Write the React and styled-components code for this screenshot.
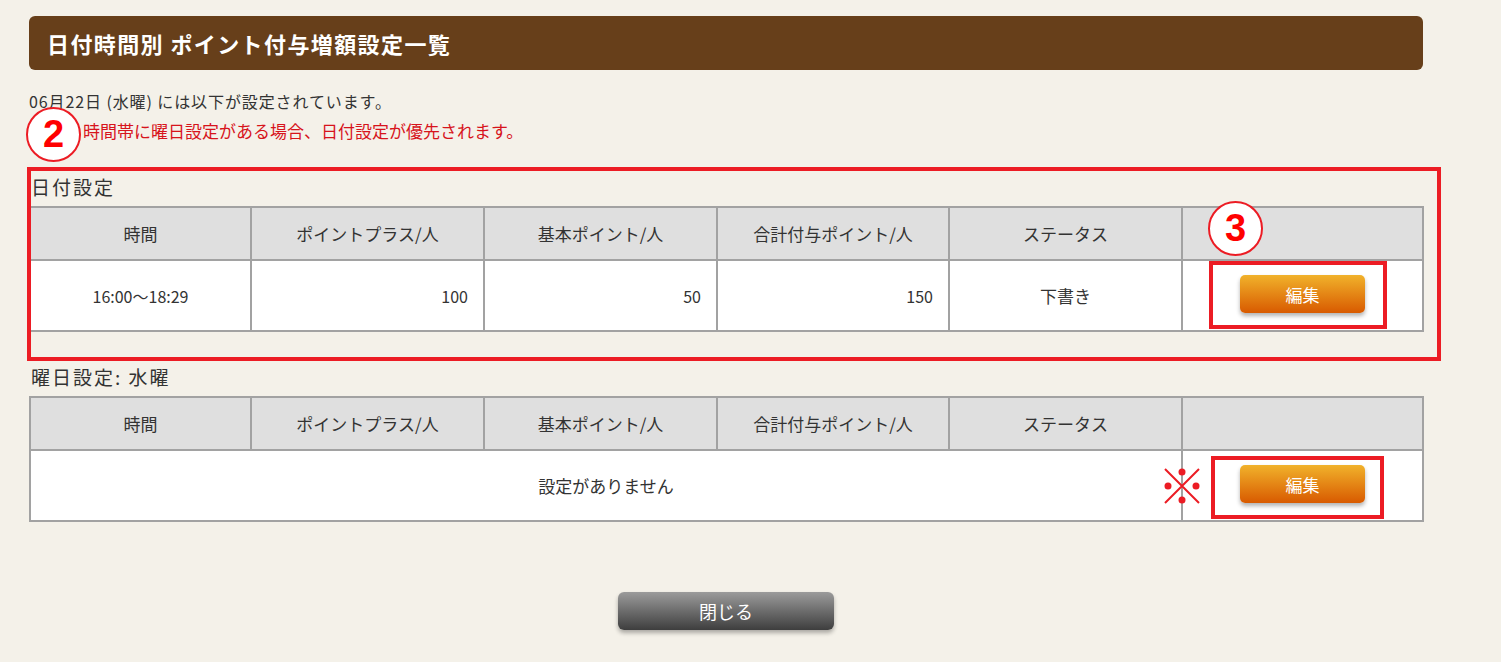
import styled, { createGlobalStyle } from "styled-components";

const GlobalStyle = createGlobalStyle`
  body {
    margin: 0;
    background: #f4f1e9;
    font-family: "Noto Sans CJK JP", "Noto Sans", sans-serif;
    color: #333;
  }
`;

const Page = styled.div`
  position: relative;
  width: 1501px;
  height: 662px;
  overflow: hidden;
`;

const Wrap = styled.div`
  width: 1394px;
  padding: 16px 0 0 29px;
`;

const Header = styled.h1`
  margin: 0;
  height: 54px;
  line-height: 54px;
  padding-left: 18px;
  background: #673f1a;
  border-radius: 6px;
  color: #fff;
  font-size: 22px;
  font-weight: 700;
  letter-spacing: 1.4px;
`;

const Intro = styled.div`
  margin-top: 16px;
  line-height: 30px;
  p {
    margin: 0;
    font-size: 16px;
    letter-spacing: 0.9px;
  }
  .notice {
    color: #d7141c;
    font-size: 17px;
    letter-spacing: 0;
    padding-left: 54px;
  }
`;

const SectionTitle = styled.h2`
  margin: ${(p) => p.$top}px 0 6px 2px;
  font-size: 19px;
  font-weight: 400;
  line-height: 26px;
  letter-spacing: 2px;
`;

const Table = styled.table`
  width: 1393px;
  border-collapse: collapse;
  background: #fff;
  table-layout: fixed;
  th,
  td {
    border: 2px solid #a2a2a2;
    font-size: 17px;
    font-weight: 400;
  }
  th {
    height: 49px;
    background: #dfdfdf;
    color: #333;
  }
  td {
    height: 69px;
    text-align: center;
    padding: 0 15px;
  }
  td.time {
    font-size: 16px;
  }
  td.num {
    text-align: right;
    font-size: 16px;
  }
`;

const EditButton = styled.button`
  width: 125px;
  height: 38px;
  margin-bottom: 3px;
  border: none;
  border-radius: 5px;
  background: linear-gradient(#f1b22b, #d85a00);
  box-shadow: 0 3px 4px rgba(0, 0, 0, 0.3);
  color: #fff;
  font-family: inherit;
  font-size: 17px;
  cursor: pointer;
`;

const Footer = styled.div`
  display: flex;
  justify-content: center;
  margin-top: 70px;
`;

const CloseButton = styled.button`
  width: 216px;
  height: 38px;
  border: none;
  border-radius: 6px;
  background: linear-gradient(#9b9b9b, #3e3e3e);
  box-shadow: 0 3px 4px rgba(0, 0, 0, 0.3);
  color: #fff;
  font-family: inherit;
  font-size: 18px;
`;

/* annotation overlays */
const Frame = styled.div`
  position: absolute;
  left: ${(p) => p.$x}px;
  top: ${(p) => p.$y}px;
  width: ${(p) => p.$w}px;
  height: ${(p) => p.$h}px;
  border: 4px solid #ec1c24;
  box-sizing: border-box;
  pointer-events: none;
`;

const Badge = styled.div`
  position: absolute;
  left: ${(p) => p.$x}px;
  top: ${(p) => p.$y}px;
  width: 55px;
  height: 55px;
  border: 2px solid #ec1c24;
  border-radius: 50%;
  background: #fff;
  display: flex;
  align-items: center;
  justify-content: center;
  color: #f00;
  font-family: "Liberation Sans", Arial, sans-serif;
  font-size: 38px;
  font-weight: 700;
  box-sizing: border-box;
`;

const Kome = styled.svg`
  position: absolute;
  left: 1163px;
  top: 467px;
`;

const cols = ["時間", "ポイントプラス/人", "基本ポイント/人", "合計付与ポイント/人", "ステータス", ""];
const widths = [221, 233, 233, 232, 233, 241];

const Head = () => (
  <>
    <colgroup>
      {widths.map((w, i) => (
        <col key={i} style={{ width: w }} />
      ))}
    </colgroup>
    <thead>
      <tr>
        {cols.map((c, i) => (
          <th key={i}>{c}</th>
        ))}
      </tr>
    </thead>
  </>
);

export default function App() {
  return (
    <Page>
      <GlobalStyle />
      <Wrap>
        <Header>日付時間別 ポイント付与増額設定一覧</Header>
        <Intro>
          <p>06月22日 (水曜) には以下が設定されています。</p>
          <p className="notice">時間帯に曜日設定がある場合、日付設定が優先されます。</p>
        </Intro>

        <SectionTitle $top={28}>日付設定</SectionTitle>
        <Table>
          <Head />
          <tbody>
            <tr>
              <td className="time">16:00〜18:29</td>
              <td className="num">100</td>
              <td className="num">50</td>
              <td className="num">150</td>
              <td>下書き</td>
              <td>
                <EditButton>編集</EditButton>
              </td>
            </tr>
          </tbody>
        </Table>

        <SectionTitle $top={32}>曜日設定: 水曜</SectionTitle>
        <Table>
          <Head />
          <tbody>
            <tr>
              <td colSpan={5}>設定がありません</td>
              <td>
                <EditButton>編集</EditButton>
              </td>
            </tr>
          </tbody>
        </Table>

        <Footer>
          <CloseButton>閉じる</CloseButton>
        </Footer>
      </Wrap>

      <Frame $x={27} $y={167} $w={1414} $h={194} />
      <Frame $x={1209} $y={261} $w={178} $h={68} />
      <Frame $x={1211} $y={456} $w={173} $h={63} />
      <Badge $x={26} $y={107}>2</Badge>
      <Badge $x={1208} $y={201}>3</Badge>
      <Kome width="38" height="38" viewBox="0 0 38 38">
        <path d="M2 2 L36 36 M36 2 L2 36" stroke="#ec1c24" strokeWidth="2" />
        <circle cx="19" cy="5" r="3.5" fill="#ec1c24" />
        <circle cx="19" cy="33" r="3.5" fill="#ec1c24" />
        <circle cx="5" cy="19" r="3.5" fill="#ec1c24" />
        <circle cx="33" cy="19" r="3.5" fill="#ec1c24" />
      </Kome>
    </Page>
  );
}
